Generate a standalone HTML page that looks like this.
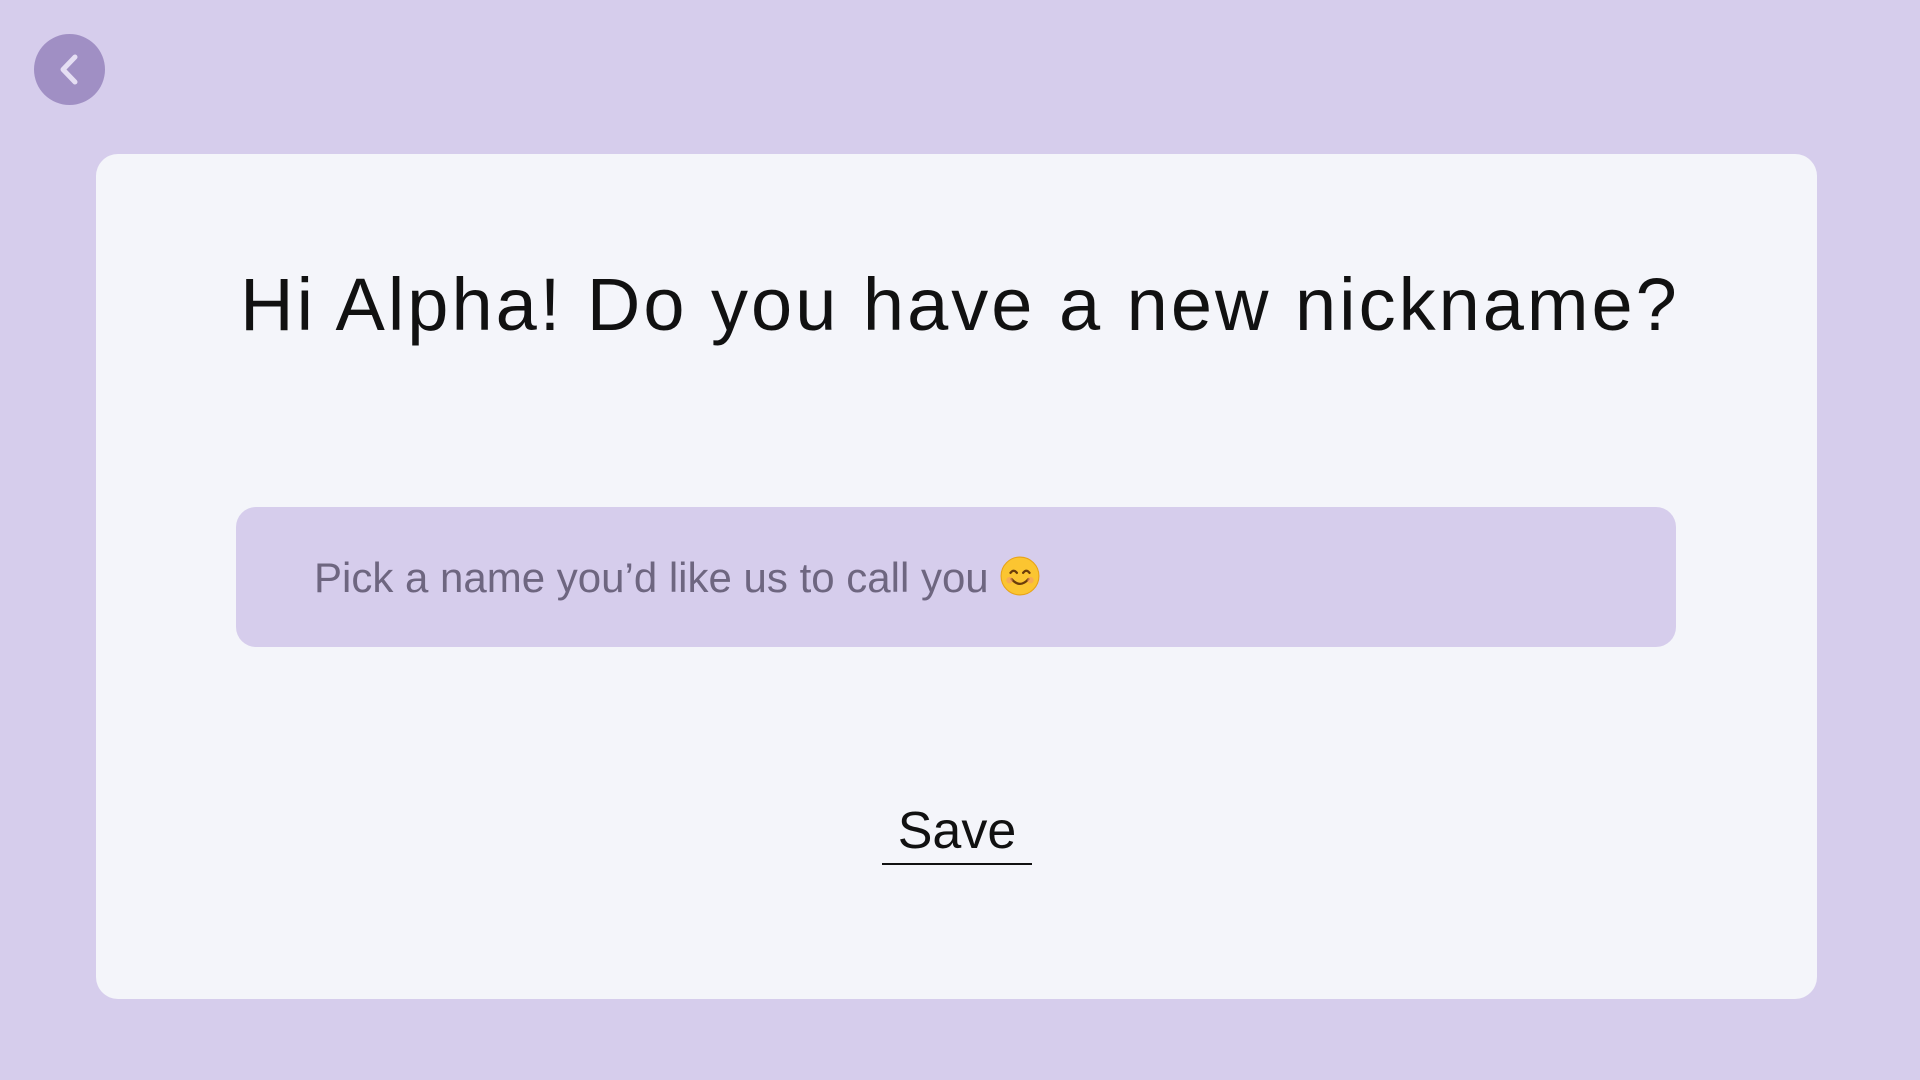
<!DOCTYPE html>
<html><head><meta charset="utf-8"><style>
html,body{margin:0;padding:0;width:1920px;height:1080px;background:#d6cdec;overflow:hidden;font-family:"Liberation Sans",sans-serif}
.back{position:absolute;left:34px;top:34px;width:71px;height:71px;border-radius:50%;background:#a08fc4}
.card{position:absolute;left:96px;top:154px;width:1721px;height:845px;background:#f4f5fa;border-radius:22px}
h1{position:absolute;left:0;width:1920px;top:262px;margin:0;text-align:center;font-weight:normal;font-size:74px;color:#111;letter-spacing:3px}
.input{position:absolute;left:236px;top:507px;width:1440px;height:140px;background:#d6cdec;border-radius:20px}
.ph{position:absolute;left:314px;top:554px;font-size:42px;color:#6e6680}
.save{position:absolute;left:882px;top:801px;width:150px;text-align:center;font-size:52px;color:#111;border-bottom:2px solid #111;padding-bottom:2px;line-height:60px}
</style></head><body>
<div class="back"><svg width="71" height="71" viewBox="0 0 71 71"><path d="M41 23 L29 35.5 L41 48" fill="none" stroke="#e5def3" stroke-width="5" stroke-linecap="round" stroke-linejoin="round"/></svg></div>
<div class="card"></div>
<h1>Hi Alpha! Do you have a new nickname?</h1>
<div class="input"></div>
<div class="ph">Pick a name you’d like us to call you <svg width="40" height="40" viewBox="0 0 38 38" style="vertical-align:-4px"><circle cx="19" cy="19" r="18" fill="#fbc531" stroke="#e8a317"/><path d="M10 16 q3-4 6 0 M22 16 q3-4 6 0" fill="none" stroke="#6b3d0a" stroke-width="2.2" stroke-linecap="round"/><path d="M11 22 q8 9 16 0" fill="none" stroke="#6b3d0a" stroke-width="2.2" stroke-linecap="round"/><circle cx="9" cy="23" r="3" fill="#f59a6b" opacity=".6"/><circle cx="29" cy="23" r="3" fill="#f59a6b" opacity=".6"/></svg></div>
<div class="save">Save</div>
</body></html>
